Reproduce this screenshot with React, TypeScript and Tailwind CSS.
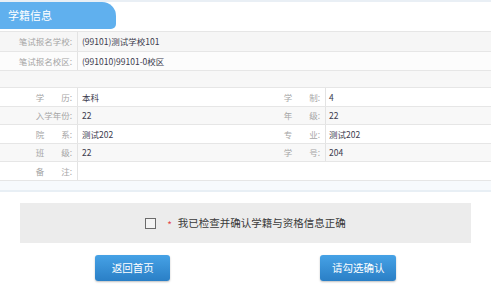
const fields = [
  ["学　　历:", "本科", "学　　制:", "4"],
  ["入学年份:", "22", "年　　级:", "22"],
  ["院　　系:", "测试202", "专　　业:", "测试202"],
  ["班　　级:", "22", "学　　号:", "204"],
];

const rowBg = ["bg-white", "bg-[#f8f8f8]", "bg-white", "bg-[#f8f8f8]"];
const rowH = ["h-[19px]", "h-[18px]", "h-[19px]", "h-[18px]"];

const Label = ({ text, w }: { text: string; w: string }) => (
  <div className={`${w} shrink-0 h-full flex items-center justify-end pr-[5px] text-[#a6a6a6] border-r border-[#e3e3e3]`}>
    {text}
  </div>
);

export default function App() {
  return (
    <div className="w-[491px] h-[303px] bg-white font-['Noto_Sans_CJK_SC','Noto_Sans',sans-serif] overflow-hidden">
      <div className="border-t-2 border-[#e9eff5] h-[31px]">
        <div className="h-[27px] w-[116px] bg-[#60b0ee] rounded-tr-[14px] rounded-br-[5px] flex items-center pl-[8px] text-white text-[11px]">
          学籍信息
        </div>
      </div>

      <div className="text-[8.5px] text-[#3b3b4d]">
        <div className="flex h-[20px] border-t border-[#e6e6e6] bg-[#f6f6f6]">
          <Label text="笔试报名学校:" w="w-[78px]" />
          <div className="flex items-center pl-[4px]">(99101)测试学校101</div>
        </div>
        <div className="flex h-[19px] border-t border-[#e6e6e6] bg-[#fcfcfc]">
          <Label text="笔试报名校区:" w="w-[78px]" />
          <div className="flex items-center pl-[4px]">(991010)99101-0校区</div>
        </div>
        <div className="h-[17px] border-t border-[#e6e6e6] bg-[#f7f7f7]" />

        {fields.map((f, i) => (
          <div key={i} className={`flex ${rowH[i]} border-t border-[#e6e6e6] ${rowBg[i]}`}>
            <Label text={f[0]} w="w-[78px]" />
            <div className="w-[167px] flex items-center pl-[4px]">{f[1]}</div>
            <Label text={f[2]} w="w-[81px]" />
            <div className="flex-1 flex items-center pl-[3px]">{f[3]}</div>
          </div>
        ))}
        <div className="flex h-[19px] border-t border-[#e6e6e6] bg-white">
          <Label text="备　　注:" w="w-[78px]" />
          <div className="flex-1" />
        </div>
        <div className="h-[12px] border-t border-[#e6e6e6] bg-[#f7fafd] border-b-2 border-b-[#e8eff5]" />
      </div>

      <div className="mx-[20px] mt-[11px] h-[40px] bg-[#ececec] flex items-center justify-center">
        <span className="w-[11px] h-[11px] border-[1.5px] border-[#6b6b6b] bg-[#f4f4f4]" />
        <span className="ml-[11px] text-[#e5474e] text-[10px] leading-none pt-[3px]">*</span>
        <span className="ml-[6px] text-[10.5px] text-[#3a3a3a]">我已检查并确认学籍与资格信息正确</span>
      </div>

      <div className="mx-[20px] mt-[12px] grid grid-cols-2">
        <div className="flex justify-center">
          <button className="w-[75px] h-[26px] rounded-[3px] bg-gradient-to-b from-[#46a2e6] to-[#2a7fc6] text-white text-[10.5px] shadow-[0_1px_2px_rgba(0,0,0,0.25)]">
            返回首页
          </button>
        </div>
        <div className="flex justify-center">
          <button className="w-[76px] h-[26px] rounded-[3px] bg-gradient-to-b from-[#46a2e6] to-[#2a7fc6] text-white text-[10.5px] shadow-[0_1px_2px_rgba(0,0,0,0.25)]">
            请勾选确认
          </button>
        </div>
      </div>
    </div>
  );
}
